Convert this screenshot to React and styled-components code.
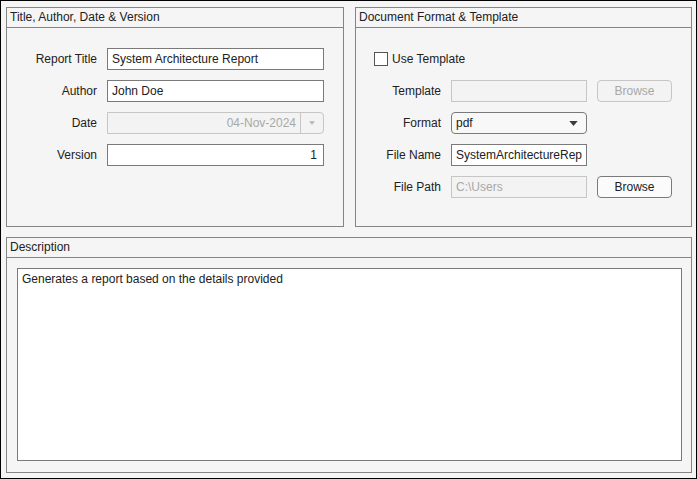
import React from "react";
import styled, { createGlobalStyle } from "styled-components";

const GlobalStyle = createGlobalStyle`
  * { box-sizing: border-box; }
  body {
    margin: 0;
    background: #f5f5f5;
    font-family: "Liberation Sans", Arial, sans-serif;
    font-size: 12px;
    color: #212121;
  }
`;

function App() {
  return (
    <Window>
      <GlobalStyle />
      <Panel>
        <PanelTitle>Title, Author, Date &amp; Version</PanelTitle>
        <FormGrid cols="90px 217px">
          <Label>Report Title</Label>
          <TextBox>System Architecture Report</TextBox>
          <Label>Author</Label>
          <TextBox>John Doe</TextBox>
          <Label>Date</Label>
          <DatePicker>
            <DateValue>04-Nov-2024</DateValue>
            <DateArrow>
              <Caret size={6} color="#b5b5b5" />
            </DateArrow>
          </DatePicker>
          <Label>Version</Label>
          <TextBox align="right">1</TextBox>
        </FormGrid>
      </Panel>

      <Panel>
        <PanelTitle>Document Format &amp; Template</PanelTitle>
        <FormGrid cols="85px 136px 75px">
          <CheckRow>
            <CheckBox />
            <span>Use Template</span>
          </CheckRow>
          <Label>Template</Label>
          <TextBox disabled />
          <Button disabled>Browse</Button>
          <Label>Format</Label>
          <Dropdown>
            <span>pdf</span>
            <Caret size={9} color="#3a3a3a" />
          </Dropdown>
          <span />
          <Label>File Name</Label>
          <TextBox>SystemArchitectureRep</TextBox>
          <span />
          <Label>File Path</Label>
          <TextBox disabled>C:\Users</TextBox>
          <Button>Browse</Button>
        </FormGrid>
      </Panel>

      <WidePanel>
        <PanelTitle>Description</PanelTitle>
        <TextArea>Generates a report based on the details provided</TextArea>
      </WidePanel>
    </Window>
  );
}

function Caret({ size, color }) {
  return (
    <svg width={size} height={Math.round(size * 0.6)} viewBox="0 0 10 6">
      <path d="M0 0 L10 0 L5 6 Z" fill={color} />
    </svg>
  );
}

export default App;

const Window = styled.div`
  width: 697px;
  height: 479px;
  border: 1px solid #000;
  background: #f5f5f5;
  display: grid;
  grid-template-columns: 338px 337px;
  grid-template-rows: 220px 236px;
  column-gap: 11px;
  row-gap: 10px;
  padding: 6px 0 0 5px;
`;

const Panel = styled.div`
  border: 1px solid #858585;
  display: flex;
  flex-direction: column;
`;

const WidePanel = styled(Panel)`
  grid-column: 1 / span 2;
`;

const PanelTitle = styled.div`
  height: 20px;
  line-height: 18px;
  padding-left: 3px;
  border-bottom: 1px solid #858585;
  white-space: nowrap;
`;

const FormGrid = styled.div`
  display: grid;
  grid-template-columns: ${(p) => p.cols};
  grid-auto-rows: 22px;
  column-gap: 10px;
  row-gap: 10px;
  padding-top: 20px;
  align-items: center;
`;

const Label = styled.div`
  text-align: right;
  white-space: nowrap;
`;

const TextBox = styled.div`
  height: 22px;
  line-height: 20px;
  border: 1px solid ${(p) => (p.disabled ? "#c6c6c6" : "#7a7a7a")};
  background: ${(p) => (p.disabled ? "#f3f3f3" : "#fff")};
  color: ${(p) => (p.disabled ? "#a8a8a8" : "#212121")};
  padding: 0 6px 0 4px;
  text-align: ${(p) => p.align || "left"};
  white-space: nowrap;
  overflow: hidden;
`;

const DatePicker = styled.div`
  height: 22px;
  display: flex;
  border: 1px solid #c6c6c6;
  border-radius: 0 4px 4px 0;
  background: #f3f3f3;
  color: #a8a8a8;
`;

const DateValue = styled.div`
  flex: 1;
  text-align: right;
  line-height: 20px;
  padding-right: 4px;
`;

const DateArrow = styled.div`
  width: 23px;
  border-left: 1px solid #c6c6c6;
  display: flex;
  align-items: center;
  justify-content: center;
`;

const Dropdown = styled.div`
  height: 22px;
  border: 1px solid #7a7a7a;
  border-radius: 4px;
  background: #f8f8f8;
  display: flex;
  align-items: center;
  justify-content: space-between;
  padding: 0 8px 0 4px;
`;

const Button = styled.div`
  height: 22px;
  line-height: 20px;
  border: 1px solid ${(p) => (p.disabled ? "#c6c6c6" : "#7a7a7a")};
  border-radius: 4px;
  background: ${(p) => (p.disabled ? "#f3f3f3" : "#fbfbfb")};
  color: ${(p) => (p.disabled ? "#a8a8a8" : "#212121")};
  text-align: center;
`;

const CheckRow = styled.div`
  grid-column: 1 / -1;
  display: flex;
  align-items: center;
  gap: 4px;
  padding-left: 18px;
`;

const CheckBox = styled.div`
  width: 14px;
  height: 14px;
  border: 1px solid #555;
  background: #fff;
`;

const TextArea = styled.div`
  flex: 1;
  margin: 10px 9px 11px 10px;
  border: 1px solid #7a7a7a;
  background: #fff;
  padding: 3px 4px;
  line-height: 15px;
`;
